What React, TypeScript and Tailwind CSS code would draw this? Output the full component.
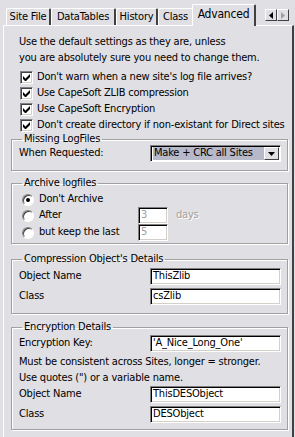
const font = { fontFamily: "'DejaVu Sans Condensed', 'Liberation Sans', Arial, sans-serif" };

const tabs = [
  { label: "Site File", w: "w-[45px]" },
  { label: "DataTables", w: "w-[65px]" },
  { label: "History", w: "w-[42px]" },
  { label: "Class", w: "w-[36px]" },
];

const options = [
  "Don't warn when a new site's log file arrives?",
  "Use CapeSoft ZLIB compression",
  "Use CapeSoft Encryption",
  "Don't create directory if non-existant for Direct sites",
];

function CheckBox() {
  return (
    <span className="box-border flex h-[13px] w-[13px] shrink-0 items-center justify-center border border-t-[#808080] border-l-[#808080] border-b-white border-r-white bg-white shadow-[inset_1px_1px_0_#404040,inset_-1px_-1px_0_#d4d0c8]">
      <svg width="7" height="7" viewBox="0 0 7 7">
        <path d="M0 2v3l2 2h1l4-4V0L2.5 4.5z" fill="#000" />
      </svg>
    </span>
  );
}

function Radio({ on }: { on?: boolean }) {
  return (
    <span className="box-border flex h-[12px] w-[12px] shrink-0 items-center justify-center rounded-full border border-t-[#808080] border-l-[#808080] border-b-white border-r-white bg-white shadow-[inset_1px_1px_0_#404040]">
      {on && <span className="h-[4px] w-[4px] rounded-full bg-black" />}
    </span>
  );
}

function Field({ value, className = "", disabled }: { value: string; className?: string; disabled?: boolean }) {
  return (
    <div
      className={`box-border flex h-[17px] items-center whitespace-nowrap border border-t-[#808080] border-l-[#808080] border-b-white border-r-white bg-white pl-[2px] shadow-[inset_1px_1px_0_#000,inset_-1px_-1px_0_#d4d0c8] ${
        disabled ? "text-[#a0a0a0]" : "text-black"
      } ${className}`}
    >
      {value}
    </div>
  );
}

function Group({ title, className = "", children }: { title: string; className?: string; children: React.ReactNode }) {
  return (
    <fieldset
      className={`ml-[7px] mr-[4px] border border-[#a0a0a0] pl-[7px] pr-[6px] shadow-[inset_1px_1px_0_#fff,1px_1px_0_#fff] ${className}`}
    >
      <legend className="ml-[3px] whitespace-nowrap px-[2px] leading-[12px]">{title}</legend>
      {children}
    </fieldset>
  );
}

export default function App() {
  return (
    <div
      className="h-[437px] w-[295px] overflow-hidden bg-[#e0dfe3] text-[11px] tracking-[-0.2px] text-black"
      style={font}
    >
      {/* tab strip */}
      <div className="flex h-[25px] items-end pl-[6px]">
        {tabs.map((t) => (
          <div
            key={t.label}
            className={`box-border flex h-[17px] ${t.w} items-center justify-center whitespace-nowrap rounded-t-[2px] border-t border-l border-r-2 border-t-white border-l-white border-r-[#404040]`}
          >
            {t.label}
          </div>
        ))}
        <div className="relative z-10 -mb-px -ml-[2px] box-border flex h-[22px] w-[64px] items-center justify-center whitespace-nowrap rounded-t-[2px] border-t border-l border-r-2 border-t-white border-l-white border-r-[#404040] bg-[#e0dfe3] pb-[3px] text-[12px]">
          Advanced
        </div>
        <div className="mb-[4px] ml-[9px] flex">
          <div className="box-border flex h-[12px] w-[12px] items-center justify-center border border-t-white border-l-white border-r-[#404040] border-b-[#404040]">
            <svg width="4" height="7" viewBox="0 0 4 7">
              <path d="M4 0v7L0 3.5z" fill="#000" />
            </svg>
          </div>
          <div className="box-border flex h-[12px] w-[12px] items-center justify-center border border-t-white border-l-white border-r-[#404040] border-b-[#404040]">
            <svg width="4" height="7" viewBox="0 0 4 7">
              <path d="M0 0v7l4-3.5z" fill="#a0a0a0" />
            </svg>
          </div>
        </div>
      </div>

      {/* panel */}
      <div className="ml-[3px] mr-[1px] h-[420px] border-t border-l border-r-2 border-t-white border-l-white border-r-[#404040] pt-[8px]">
        <div className="whitespace-nowrap pl-[15px] leading-[16px]">
          <p>Use the default settings as they are, unless</p>
          <p>you are absolutely sure you need to change them.</p>
        </div>
        <div className="mt-[3px] flex flex-col pl-[16px]">
          {options.map((o) => (
            <div key={o} className="flex h-[16px] items-center gap-[4px] whitespace-nowrap">
              <CheckBox />
              <span>{o}</span>
            </div>
          ))}
        </div>

        <Group title="Missing LogFiles" className="mt-0 pb-[8px]">
          <div className="flex h-[17px] items-center justify-between">
            <span>When Requested:</span>
            <div className="box-border flex h-[17px] w-[131px] items-center border border-t-[#808080] border-l-[#808080] border-b-white border-r-white bg-white p-[1px] shadow-[inset_1px_1px_0_#000]">
              <div className="ml-[1px] flex h-full flex-1 items-center whitespace-nowrap bg-[#b7b8c8] pl-[1px] text-black">
                Make + CRC all Sites
              </div>
              <div className="box-border flex h-full w-[15px] items-center justify-center border border-t-white border-l-white border-r-[#404040] border-b-[#404040] bg-[#e0dfe3]">
                <svg width="7" height="4" viewBox="0 0 7 4">
                  <path d="M0 0h7L3.5 4z" fill="#000" />
                </svg>
              </div>
            </div>
          </div>
        </Group>

        <Group title="Archive logfiles" className="mt-[6px] pb-[2px] pt-[3px]">
          <div className="flex flex-col pl-[3px]">
            <div className="flex h-[15px] items-center gap-[5px]">
              <Radio on />
              <span>Don't Archive</span>
            </div>
            <div className="flex h-[17px] items-center">
              <div className="flex w-[116px] items-center gap-[5px]">
                <Radio />
                <span>After</span>
              </div>
              <Field value="3" disabled className="h-[16px] w-[30px]" />
              <span className="ml-[8px] text-[#a0a0a0] [text-shadow:1px_1px_0_#fff]">days</span>
            </div>
            <div className="flex h-[17px] items-center">
              <div className="flex w-[116px] items-center gap-[5px]">
                <Radio />
                <span className="whitespace-nowrap">but keep the last</span>
              </div>
              <Field value="5" disabled className="h-[16px] w-[30px]" />
            </div>
          </div>
        </Group>

        <Group title="Compression Object's Details" className="mt-[9px] pb-[8px] pt-[3px]">
          <div className="flex flex-col gap-[3px]">
            <div className="flex items-center justify-between">
              <span>Object Name</span>
              <Field value="ThisZlib" className="w-[131px]" />
            </div>
            <div className="flex items-center justify-between">
              <span>Class</span>
              <Field value="csZlib" className="w-[131px]" />
            </div>
          </div>
        </Group>

        <Group title="Encryption Details" className="mt-[7px] pb-[6px] pt-[2px]">
          <div className="flex flex-col">
            <div className="flex items-center justify-between">
              <span>Encryption Key:</span>
              <Field value="'A_Nice_Long_One'" className="w-[131px]" />
            </div>
            <p className="mt-[2px] whitespace-nowrap leading-[16px]">Must be consistent across Sites, longer = stronger.</p>
            <p className="whitespace-nowrap leading-[16px]">Use quotes (") or a variable name.</p>
            <div className="flex flex-col gap-[3px]">
              <div className="flex items-center justify-between">
                <span>Object Name</span>
                <Field value="ThisDESObject" className="w-[131px]" />
              </div>
              <div className="flex items-center justify-between">
                <span>Class</span>
                <Field value="DESObject" className="w-[131px]" />
              </div>
            </div>
          </div>
        </Group>
      </div>
    </div>
  );
}
